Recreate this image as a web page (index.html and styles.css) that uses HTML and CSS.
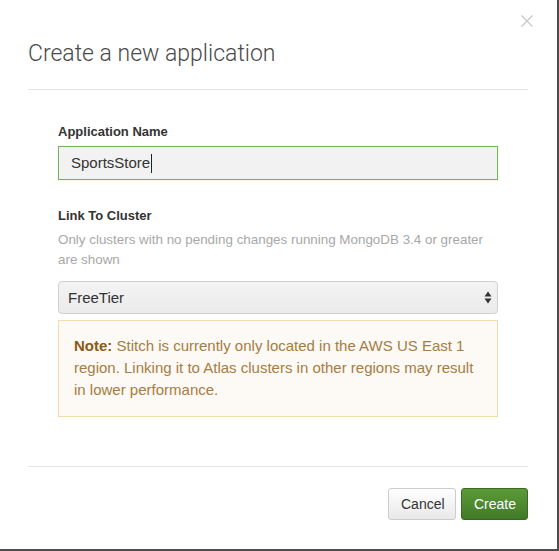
FILE: index.html
```html
<!DOCTYPE html>
<html>
<head>
<meta charset="utf-8">
<link rel="stylesheet" href="styles.css">
</head>
<body>
<div class="modal">
  <div class="modal-header">
    <h1 class="title">Create a new application</h1>
    <button class="close" aria-label="Close">
      <svg width="12" height="12" viewBox="0 0 12 12"><path d="M0.5 0.5 L11.5 11.5 M11.5 0.5 L0.5 11.5" stroke="#c8c8c8" stroke-width="1.3" fill="none"/></svg>
    </button>
  </div>
  <div class="modal-body">
    <label class="field-label">Application Name</label>
    <div class="text-input">SportsStore<span class="caret"></span></div>

    <label class="field-label second">Link To Cluster</label>
    <p class="help">Only clusters with no pending changes running MongoDB 3.4 or greater are shown</p>
    <div class="select">
      <span>FreeTier</span>
      <svg class="arrows" width="8" height="13" viewBox="0 0 8 13"><path d="M4 0.5 L7.5 5.5 L0.5 5.5 Z M4 12.5 L7.5 7.5 L0.5 7.5 Z" fill="#333"/></svg>
    </div>
    <div class="note"><strong>Note:</strong> Stitch is currently only located in the AWS US East 1 region. Linking it to Atlas clusters in other regions may result in lower performance.</div>
  </div>
  <div class="modal-footer">
    <button class="btn btn-default">Cancel</button>
    <button class="btn btn-primary">Create</button>
  </div>
</div>
</body>
</html>
```
FILE: styles.css
```css
html, body {
  margin: 0;
  padding: 0;
}
body {
  background: #4d4d4d;
  width: 559px;
  height: 551px;
  overflow: hidden;
  font-family: "Liberation Sans", Arial, sans-serif;
}
.modal {
  position: relative;
  width: 557px;
  height: 549px;
  background: #fff;
  box-sizing: border-box;
  padding: 0 29px 0 28px;
}
.modal-header {
  height: 89px;
  border-bottom: 1px solid #e5e5e5;
  box-sizing: content-box;
}
.title {
  margin: 0;
  padding-top: 39px;
  font-family: Roboto, "Liberation Sans", sans-serif;
  font-weight: 300;
  font-size: 23px;
  line-height: 30px;
  color: #4a4a4a;
}
.close {
  position: absolute;
  top: 15px;
  left: 521px;
  width: 12px;
  height: 12px;
  padding: 0;
  border: 0;
  background: none;
  line-height: 0;
}
.modal-body {
  padding: 33px 30px 49px 30px;
  border-bottom: 1px solid #e5e5e5;
}
.field-label {
  display: block;
  font-size: 13px;
  font-weight: bold;
  line-height: 18px;
  color: #333;
  margin-bottom: 5px;
}
.field-label.second {
  margin-top: 27px;
}
.text-input {
  height: 32px;
  border: 1px solid #76b353;
  background: #f2f2f2;
  box-shadow: 0 0 1px rgba(118,179,83,0.4);
  padding: 0 12px;
  font-size: 15px;
  line-height: 32px;
  color: #333;
  display: flex;
  align-items: center;
}
.caret {
  display: inline-block;
  width: 1px;
  height: 19px;
  background: #222;
  margin-left: 1px;
}
.help {
  margin: 0 0 11px;
  font-size: 13.4px;
  line-height: 20px;
  color: #a8a8a8;
}
.select {
  height: 31px;
  border: 1px solid #d0d0d0;
  border-radius: 4px;
  background: linear-gradient(#f3f3f3, #ebebeb);
  display: flex;
  align-items: center;
  justify-content: space-between;
  padding: 0 5px 0 9px;
  font-size: 15px;
  color: #333;
}
.note {
  margin-top: 6px;
  border: 1px solid #f2dcae;
  background: #fdf9f4;
  padding: 14px 12px 15px 15px;
  font-size: 15px;
  line-height: 22px;
  color: #a57d45;
}
.note strong {
  color: #8a5a17;
}
.modal-footer {
  display: flex;
  justify-content: flex-end;
  gap: 5px;
  padding-top: 21px;
}
.btn {
  height: 32px;
  font-family: "Liberation Sans", Arial, sans-serif;
  font-size: 14px;
  border-radius: 3px;
  padding: 0 12px;
  cursor: pointer;
}
.btn-default {
  width: 68px;
  background: linear-gradient(#fff, #e8e8e8);
  border: 1px solid #ccc;
  color: #333;
}
.btn-primary {
  width: 67px;
  background: linear-gradient(#5b9a38, #417a27);
  border: 1px solid #3a6a22;
  color: #fff;
}
```
